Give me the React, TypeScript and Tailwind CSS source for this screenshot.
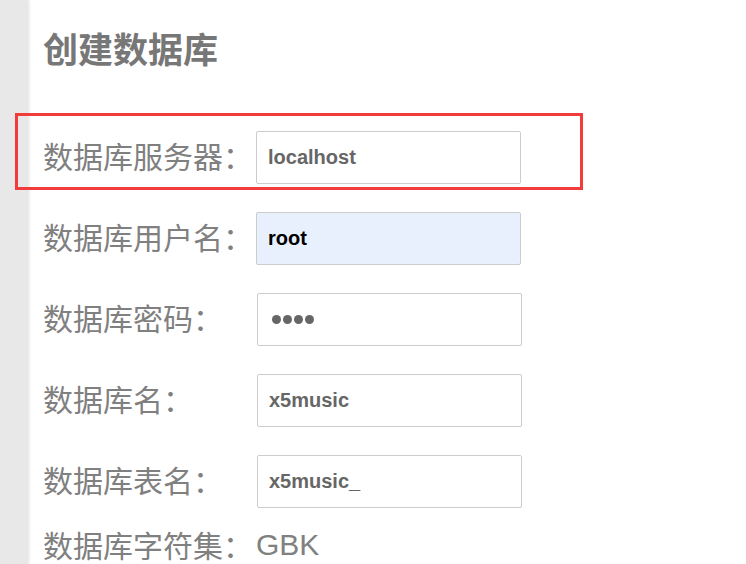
import React from "react";

const cjk = '"Noto Sans CJK SC", "Noto Sans", sans-serif';
const latin = '"Liberation Sans", Arial, sans-serif';

type Row = { label: string; value: string; nudge: boolean; autofill?: boolean; password?: boolean };

const rows: Row[] = [
  { label: "数据库服务器：", value: "localhost", nudge: false },
  { label: "数据库用户名：", value: "root", nudge: false, autofill: true },
  { label: "数据库密码：", value: "", nudge: true, password: true },
  { label: "数据库名：", value: "x5music", nudge: true },
  { label: "数据库表名：", value: "x5music_", nudge: true },
];

export default function App() {
  return (
    <div className="relative flex w-[746px] h-[564px] overflow-hidden bg-white">
      <div className="w-[28px] shrink-0 bg-[#e8e8e8] shadow-[1px_0_3px_rgba(0,0,0,0.12)]" />
      <div className="flex flex-col pl-[15px] pt-[24px]">
        <h1
          className="text-[35px] leading-[48px] font-bold text-[#777777]"
          style={{ fontFamily: cjk }}
        >
          创建数据库
        </h1>
        <div className="mt-[59px] flex flex-col gap-[28px]">
          {rows.map((r) => (
            <div key={r.label} className="flex items-center h-[53px]">
              <span
                className={`mb-[6px] text-[30px] leading-[40px] text-[#808080] whitespace-nowrap ${r.nudge ? "w-[214px]" : "w-[213px]"}`}
                style={{ fontFamily: cjk }}
              >
                {r.label}
              </span>
              {r.password ? (
                <div className="flex items-center gap-[2px] w-[265px] h-[53px] border border-[#cccccc] rounded-[2px] bg-white pl-[14px]">
                  <span className="w-[9px] h-[9px] rounded-full bg-[#666666]" />
                  <span className="w-[9px] h-[9px] rounded-full bg-[#666666]" />
                  <span className="w-[9px] h-[9px] rounded-full bg-[#666666]" />
                  <span className="w-[9px] h-[9px] rounded-full bg-[#666666]" />
                </div>
              ) : (
                <input
                  readOnly
                  defaultValue={r.value}
                  className={`w-[265px] h-[53px] border border-[#cccccc] rounded-[2px] px-[11px] text-[20px] font-bold outline-none ${
                    r.autofill ? "bg-[#e8f0fe] text-black" : "bg-white text-[#666666]"
                  }`}
                  style={{ fontFamily: latin }}
                />
              )}
            </div>
          ))}
        </div>
        <div className="mt-[16px] flex items-center h-[40px] text-[30px] text-[#808080] whitespace-nowrap">
          <span style={{ fontFamily: cjk }}>数据库字符集：</span>
          <span className="ml-[3px]" style={{ fontFamily: latin }}>GBK</span>
        </div>
      </div>
      <div className="absolute left-[15px] top-[113px] w-[568px] h-[77px] border-[3px] border-[#f23c3c] pointer-events-none" />
    </div>
  );
}
